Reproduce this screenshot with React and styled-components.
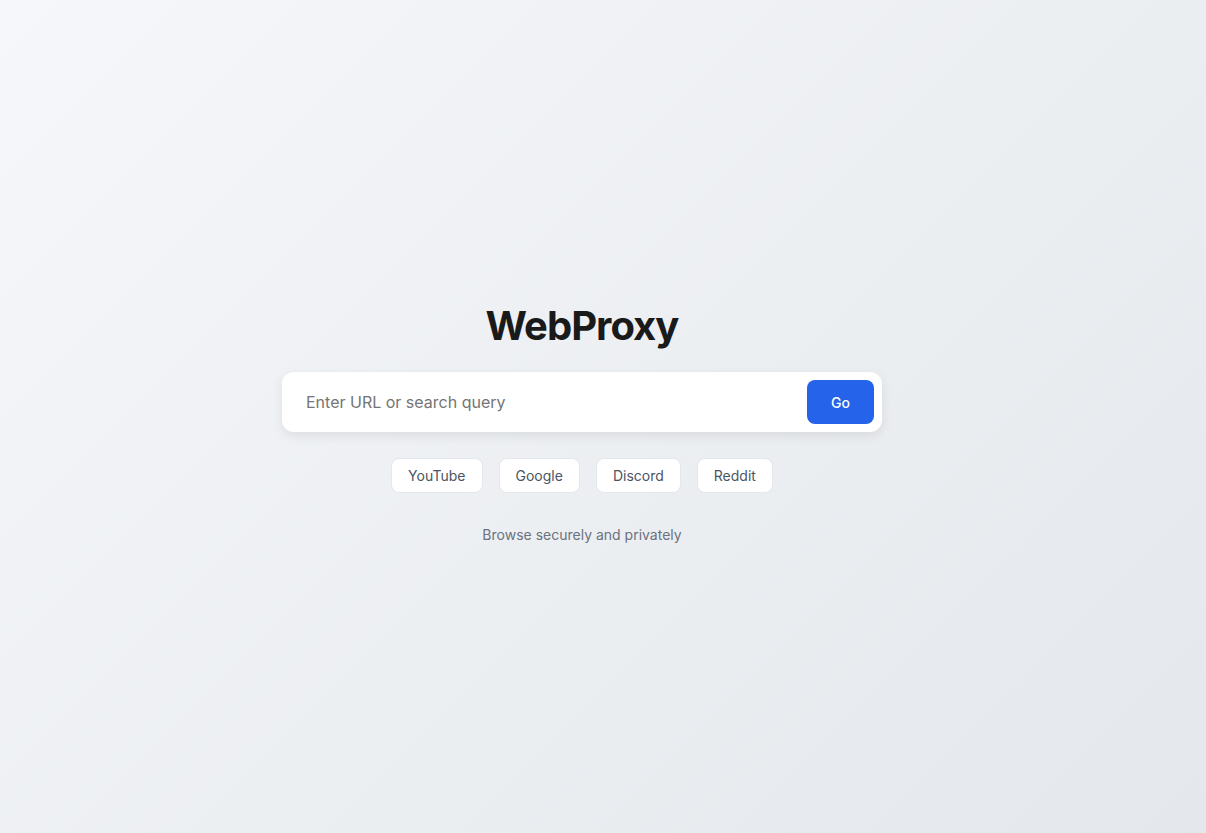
import React, { useState } from "react";
import styled, { createGlobalStyle } from "styled-components";

const Global = createGlobalStyle`
  * { box-sizing: border-box; }
  html, body { margin: 0; padding: 0; }
  body {
    font-family: Inter, "Noto Sans", sans-serif;
    background: linear-gradient(135deg, #f5f7fa 0%, #e4e7eb 100%);
    min-height: 100vh;
  }
`;

const Page = styled.main`
  min-height: 100vh;
  display: flex;
  flex-direction: column;
  align-items: center;
  justify-content: center;
  padding: 34px 62px 20px 20px;
`;

const Title = styled.h1`
  margin: 0 0 22px;
  font-size: 40px;
  font-weight: 700;
  letter-spacing: -0.025em;
  color: #1a1a1a;
  line-height: 1.2;
`;

const SearchBox = styled.form`
  width: 600px;
  height: 60px;
  display: flex;
  align-items: center;
  background: #ffffff;
  border-radius: 12px;
  box-shadow: 0 4px 12px rgba(0, 0, 0, 0.08);
  padding: 8px 8px 8px 24px;
`;

const Input = styled.input`
  flex: 1;
  border: none;
  outline: none;
  background: transparent;
  font-family: inherit;
  font-size: 16px;
  color: #1a1a1a;
  caret-color: #1a1a1a;
  padding: 0;
  &::placeholder { color: #757575; }
`;

const GoButton = styled.button`
  width: 67px;
  height: 44px;
  border: none;
  border-radius: 8px;
  background: #2563eb;
  color: #ffffff;
  font-family: inherit;
  font-size: 14px;
  font-weight: 500;
  cursor: pointer;
`;

const Shortcuts = styled.div`
  display: flex;
  gap: 16px;
  margin-top: 26px;
`;

const Chip = styled.button`
  height: 35px;
  padding: 0 16px;
  background: #ffffff;
  border: 1px solid #e5e7eb;
  border-radius: 8px;
  font-family: inherit;
  font-size: 14px;
  color: #4b5563;
  cursor: pointer;
`;

const Tagline = styled.p`
  margin: 32px 0 0;
  font-size: 14px;
  line-height: 20px;
  color: #6b7280;
`;

export default function App() {
  const [q, setQ] = useState("");
  return (
    <>
      <Global />
      <Page>
        <Title>WebProxy</Title>
        <SearchBox onSubmit={(e) => e.preventDefault()}>
          <Input
            autoFocus
            value={q}
            onChange={(e) => setQ(e.target.value)}
            placeholder="Enter URL or search query"
          />
          <GoButton type="submit">Go</GoButton>
        </SearchBox>
        <Shortcuts>
          {["YouTube", "Google", "Discord", "Reddit"].map((s) => (
            <Chip key={s} type="button">{s}</Chip>
          ))}
        </Shortcuts>
        <Tagline>Browse securely and privately</Tagline>
      </Page>
    </>
  );
}
